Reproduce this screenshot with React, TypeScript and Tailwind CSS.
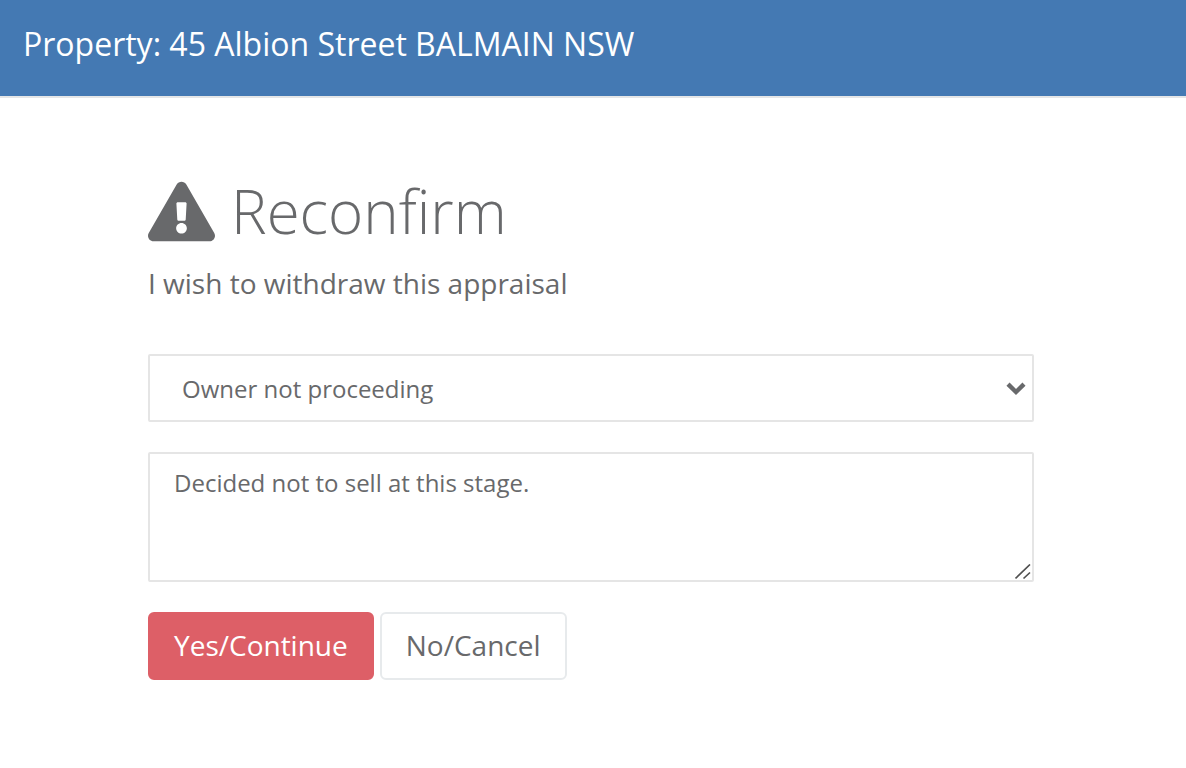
import { useState } from "react";
import { FaExclamationTriangle } from "react-icons/fa";

export default function App() {
  const [reason, setReason] = useState("Owner not proceeding");
  const [notes, setNotes] = useState("Decided not to sell at this stage.");

  return (
    <div className="min-h-screen bg-white font-['Open_Sans',sans-serif] text-[#68696b]">
      <header className="border-b-2 border-[#e5e6e7] bg-[#4479b3] px-[23px] pt-6 pb-8">
        <h1 className="text-[32px] leading-10 text-white">Property: 45 Albion Street BALMAIN NSW</h1>
      </header>
      <main className="pt-18 pr-38 pb-20 pl-37">
        <h2 className="flex items-center gap-4 text-[60px] leading-[82px] font-light">
          <FaExclamationTriangle aria-hidden="true" className="size-[67px] shrink-0" />
          <span>Reconfirm</span>
        </h2>
        <p className="mt-3 text-[28px] leading-[38px]">I wish to withdraw this appraisal</p>
        <form className="mt-13" onSubmit={(e) => e.preventDefault()}>
          <div className="relative">
            <select
              aria-label="Reason"
              value={reason}
              onChange={(e) => setReason(e.target.value)}
              className="block h-17 w-full appearance-none rounded-xs border-2 border-[#e5e5e5] bg-white px-8 pt-0.5 text-2xl outline-none"
            >
              <option>Owner not proceeding</option>
            </select>
            <svg aria-hidden="true" viewBox="0 0 20 14" className="pointer-events-none absolute top-7 right-2 h-[14px] w-5" fill="none" stroke="#68696b" strokeWidth="4.4">
              <path d="M2 2.2 L10 10 L18 2.2" />
            </svg>
          </div>
          <div className="relative mt-[30px]">
            <textarea
              aria-label="Notes"
              value={notes}
              onChange={(e) => setNotes(e.target.value)}
              className="block h-[130px] w-full resize-none rounded-xs border-2 border-[#e5e5e5] bg-white px-6 py-3 text-2xl leading-[34px] outline-none"
            />
            <svg aria-hidden="true" viewBox="0 0 16 16" className="pointer-events-none absolute right-[3px] bottom-[2px] size-4" fill="none" stroke="#505050" strokeWidth="1.7">
              <path d="M0.5 14.5 L15 0.5 M8.5 14.5 L15 8.5" />
            </svg>
          </div>
          <div className="mt-[30px] flex gap-[6px] text-[28px] leading-10">
            <button type="submit" className="h-17 rounded-md border-2 border-[#dd5f67] bg-[#dd5f67] px-6 pb-0.5 text-white">Yes/Continue</button>
            <button type="button" className="h-17 rounded-md border-2 border-[#e7eaec] bg-white px-6 pb-0.5">No/Cancel</button>
          </div>
        </form>
      </main>
    </div>
  );
}
